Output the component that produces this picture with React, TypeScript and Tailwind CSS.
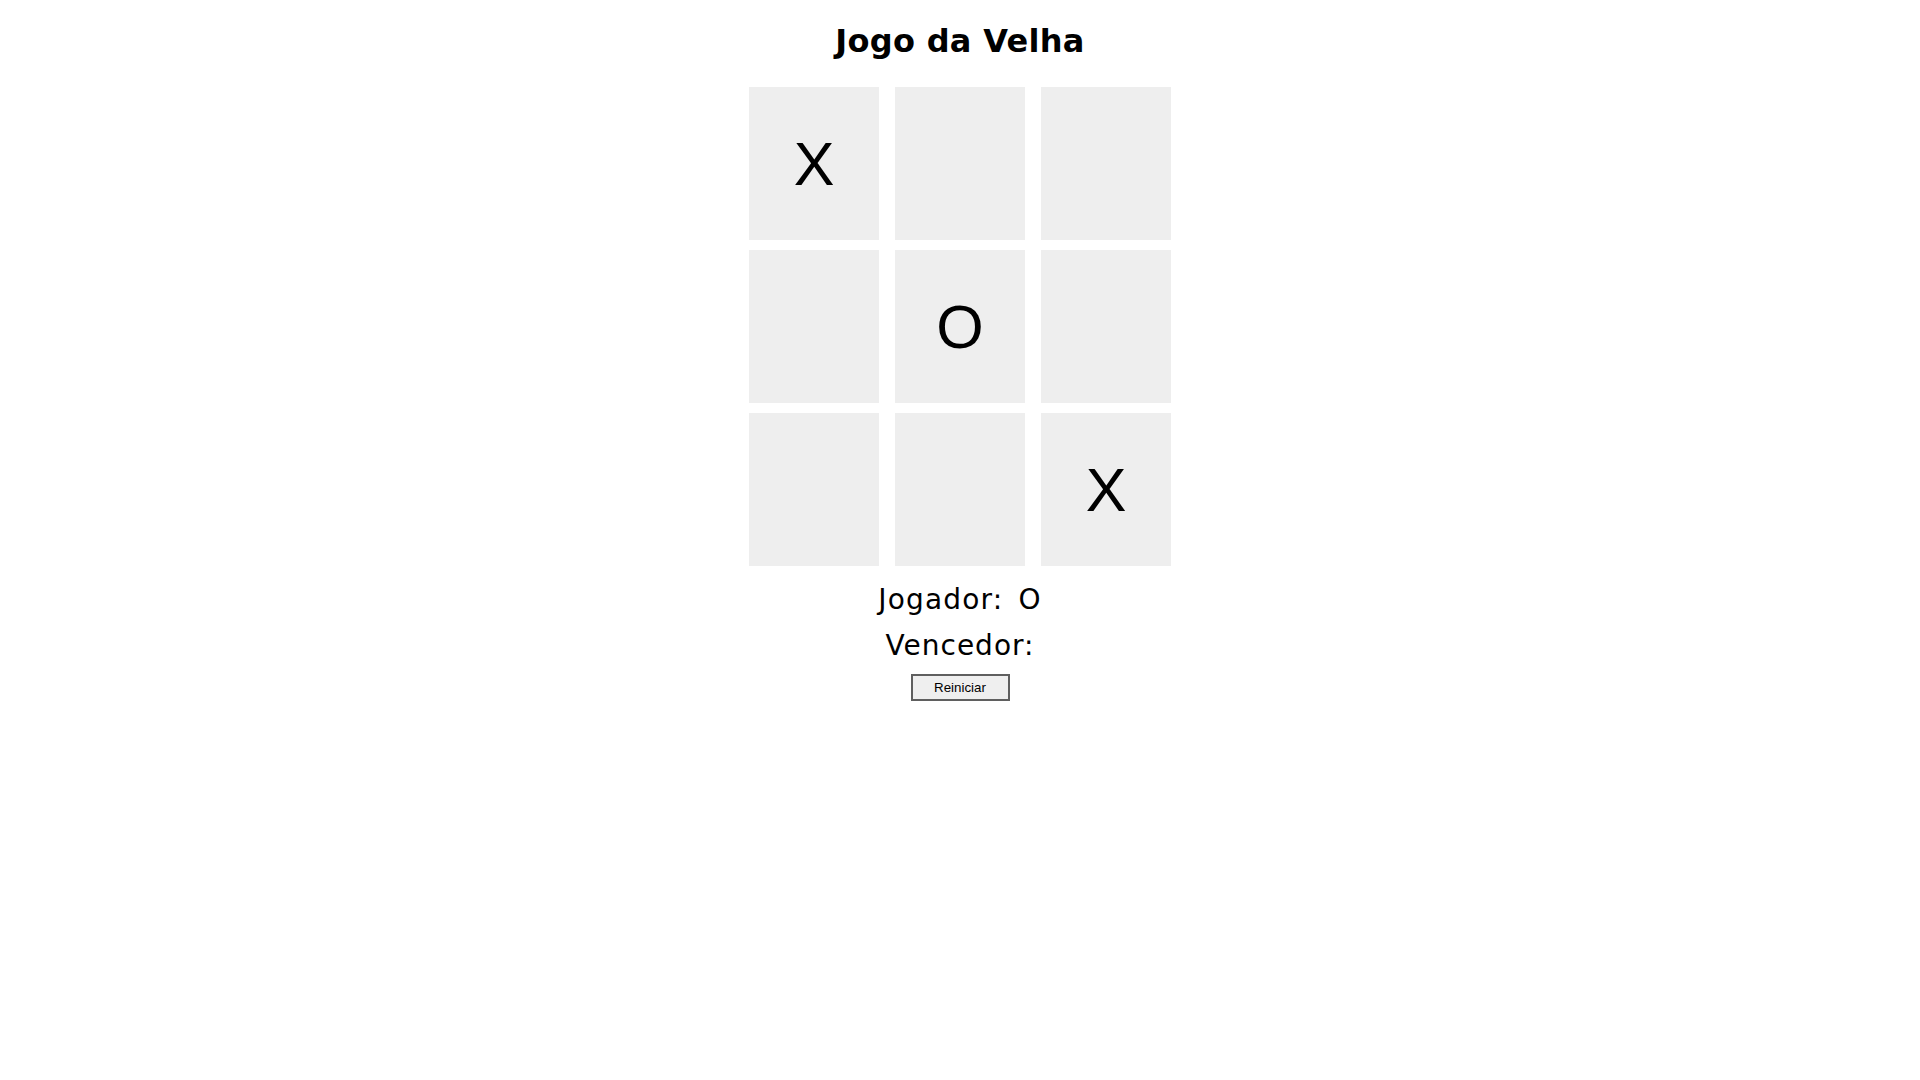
import React from "react";

const board: string[] = ["X", "", "", "", "O", "", "", "", "X"];

export default function App() {
  return (
    <div className="flex min-h-screen flex-col items-center bg-white text-black">
      <h1 className="mt-[23px] font-['DejaVu_Sans',sans-serif] text-[32px] font-bold leading-[37px] tracking-[0.3px]">
        Jogo da Velha
      </h1>

      <div className="mt-[27px] grid grid-cols-[130px_130px_130px] grid-rows-[153px_153px_153px] gap-x-4 gap-y-[10px]">
        {board.map((v, i) => (
          <button
            key={i}
            className="flex items-center justify-center bg-[#eeeeee] pt-[2px] font-['Liberation_Sans',Arial,sans-serif] text-[61px] leading-none text-black"
          >
            {v}
          </button>
        ))}
      </div>

      <p className="mt-[17px] font-['DejaVu_Sans',sans-serif] text-[28px] leading-[33px] tracking-[1.2px] [word-spacing:5px]">
        Jogador: O
      </p>
      <p className="mt-[13px] font-['DejaVu_Sans',sans-serif] text-[28px] leading-[33px] tracking-[1px]">
        Vencedor:
      </p>

      <button className="mt-[12px] h-[27px] w-[99px] border-2 border-solid border-[#5f5f5f] bg-[#efefef] font-['Liberation_Sans',Arial,sans-serif] text-[13.33px] text-black">
        Reiniciar
      </button>
    </div>
  );
}
